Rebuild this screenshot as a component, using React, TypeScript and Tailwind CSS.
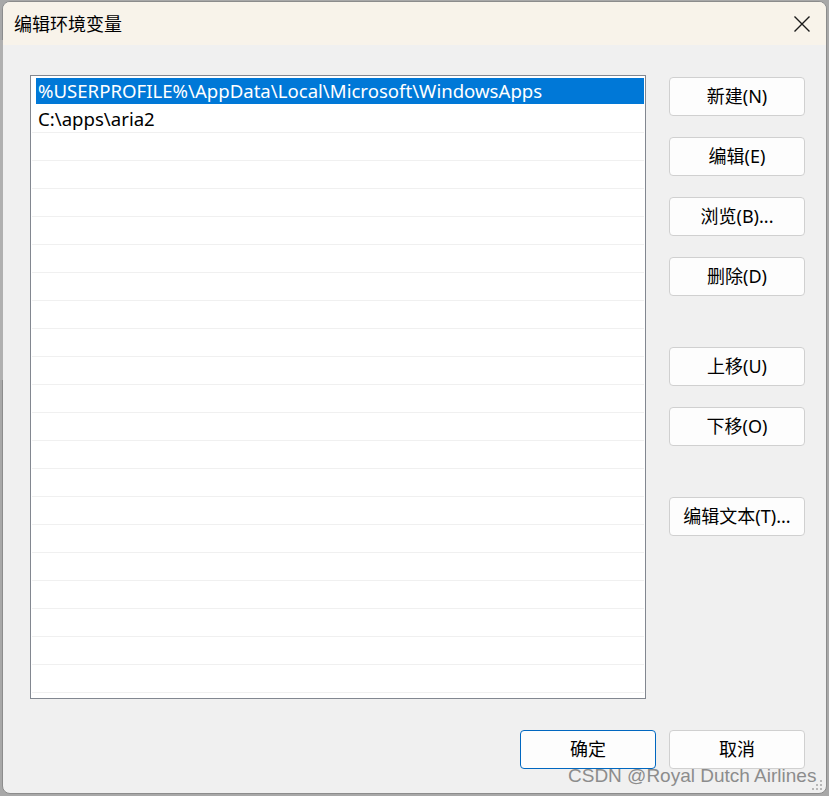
import React from "react";

const FONT = { fontFamily: '"Noto Sans", "Noto Sans CJK SC", sans-serif' };

function Btn({ label, primary = false }: { label: string; primary?: boolean }) {
  return (
    <div
      className={
        "w-[136px] h-[39px] rounded-[4px] bg-[#fdfdfd] flex items-center justify-center text-[18px] text-black " +
        (primary ? "border border-[#0067c0]" : "border border-[#d0d0d0]")
      }
    >
      {label}
    </div>
  );
}

export default function App() {
  const rows = Array.from({ length: 20 });
  return (
    <div className="w-[829px] h-[796px] bg-[#a8a8a8] relative overflow-hidden" style={FONT}>
      <div className="absolute left-0 top-[40px] w-[3px] h-[340px] bg-[#b0b0b0]" />
      <div className="ml-[2px] mt-[1px] w-[825px] h-[793px] rounded-[8px] border border-[#8c8c8c] bg-[#f0f0f0] overflow-hidden flex flex-col">
        <div className="h-[43px] bg-[#f8f3ea] flex items-center justify-between pl-[11px] pr-[14px] shrink-0">
          <span className="text-[18px] text-black leading-none">编辑环境变量</span>
          <svg width="18" height="18" viewBox="0 0 18 18" className="mr-[1px]">
            <path d="M1.5 1.5 L16.5 16.5 M16.5 1.5 L1.5 16.5" stroke="#1a1a1a" strokeWidth="1.4" />
          </svg>
        </div>
        <div className="flex flex-col pl-[27px] pt-[30px]">
          <div className="flex flex-row gap-[23px]">
            <div className="w-[616px] h-[624px] bg-white border border-[#828790] flex flex-col pl-[1px] pr-[1px] pt-[1px]">
              <div className="h-[28px] pl-[4px] pt-[1px] pb-[1px]">
                <div className="h-full bg-[#0078d7] text-white text-[18.6px] leading-[26px] pl-[2px] whitespace-nowrap">
                  %USERPROFILE%\AppData\Local\Microsoft\WindowsApps
                </div>
              </div>
              <div className="h-[28px] border-b border-[#f0f0f0] text-[18.6px] leading-[27px] pl-[6px] text-black">
                C:\apps\aria2
              </div>
              {rows.map((_, i) => (
                <div key={i} className="h-[28px] border-b border-[#f0f0f0] shrink-0" />
              ))}
            </div>
            <div className="flex flex-col pt-[2px]">
              <Btn label="新建(N)" />
              <div className="h-[21px]" />
              <Btn label="编辑(E)" />
              <div className="h-[21px]" />
              <Btn label="浏览(B)..." />
              <div className="h-[21px]" />
              <Btn label="删除(D)" />
              <div className="h-[51px]" />
              <Btn label="上移(U)" />
              <div className="h-[21px]" />
              <Btn label="下移(O)" />
              <div className="h-[51px]" />
              <Btn label="编辑文本(T)..." />
            </div>
          </div>
          <div className="flex flex-row gap-[13px] pl-[490px] pt-[31px]">
            <Btn label="确定" primary />
            <Btn label="取消" />
          </div>
        </div>
      </div>
      <div
        className="absolute left-[568px] top-[764px] text-[19px] leading-[24px] text-[#8c8c8c] whitespace-nowrap"
        style={{ fontFamily: '"Liberation Sans", Arial, sans-serif' }}
      >
        CSDN @Royal Dutch Airlines
      </div>
      <svg className="absolute left-[812px] top-[780px]" width="12" height="12" viewBox="0 0 12 12">
        <g fill="#b8b8b8">
          <rect x="8" y="0" width="2" height="2" />
          <rect x="4" y="4" width="2" height="2" />
          <rect x="8" y="4" width="2" height="2" />
          <rect x="0" y="8" width="2" height="2" />
          <rect x="4" y="8" width="2" height="2" />
          <rect x="8" y="8" width="2" height="2" />
        </g>
      </svg>
    </div>
  );
}
